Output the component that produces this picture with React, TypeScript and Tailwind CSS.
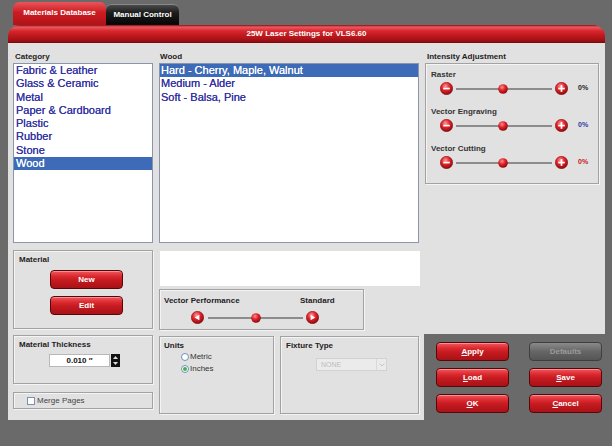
import React, { useId } from 'react';

function cleanId(s: string) {
  return s.replace(/[^a-zA-Z0-9_-]/g, '');
}

function RedCircle({ kind }: { kind: 'minus' | 'plus' | 'left' | 'right' }) {
  const id = 'g' + cleanId(useId());
  return (
    <svg width="13" height="13" viewBox="0 0 13 13" className="block shrink-0">
      <defs>
        <radialGradient id={id} cx="42%" cy="32%" r="70%">
          <stop offset="0%" stopColor="#ff9a9a" />
          <stop offset="45%" stopColor="#e2262c" />
          <stop offset="100%" stopColor="#8a080c" />
        </radialGradient>
      </defs>
      <circle cx="6.5" cy="6.5" r="6.2" fill={`url(#${id})`} stroke="#7a080b" strokeWidth="0.5" />
      {kind === 'minus' && <rect x="3.2" y="5.7" width="6.6" height="1.7" fill="#fff" />}
      {kind === 'plus' && (
        <>
          <rect x="3.2" y="5.7" width="6.6" height="1.7" fill="#fff" />
          <rect x="5.65" y="3.2" width="1.7" height="6.6" fill="#fff" />
        </>
      )}
      {kind === 'left' && <polygon points="3.6,6.5 8.4,3.7 8.4,9.3" fill="#fff" />}
      {kind === 'right' && <polygon points="9.4,6.5 4.6,3.7 4.6,9.3" fill="#fff" />}
    </svg>
  );
}

function Thumb() {
  const id = 't' + cleanId(useId());
  return (
    <svg width="10" height="10" viewBox="0 0 10 10" className="block">
      <defs>
        <radialGradient id={id} cx="40%" cy="32%" r="70%">
          <stop offset="0%" stopColor="#ff8c8c" />
          <stop offset="50%" stopColor="#dc1f25" />
          <stop offset="100%" stopColor="#8c070b" />
        </radialGradient>
      </defs>
      <circle cx="5" cy="5" r="4.8" fill={`url(#${id})`} />
    </svg>
  );
}

function Track({ width, thumbLeft }: { width: number; thumbLeft: number }) {
  return (
    <div className="relative h-[2px] bg-[#8c8c8c]" style={{ width }}>
      <div className="absolute top-[-4px]" style={{ left: thumbLeft }}>
        <Thumb />
      </div>
    </div>
  );
}

function RedBtn({ children, className }: { children: React.ReactNode; className?: string }) {
  return (
    <div
      className={
        'flex items-center justify-center rounded-[4px] border border-[#5a0508] bg-[linear-gradient(to_bottom,#ef5a5f_0%,#dc2a30_30%,#c41a20_55%,#a81217_100%)] text-[8px] font-bold leading-none text-white shadow-[inset_0_1px_0_rgba(255,255,255,0.35)] ' +
        (className || '')
      }
    >
      {children}
    </div>
  );
}

function Group({ className, children }: { className?: string; children?: React.ReactNode }) {
  return (
    <div
      className={
        'border border-[#a2a2a2] shadow-[inset_1px_1px_0_#f4f4f4,1px_1px_0_#f4f4f4] ' + (className || '')
      }
    >
      {children}
    </div>
  );
}

const label = 'text-[8px] font-bold leading-[9px] text-[#222]';

function IntensityRow({ name, color }: { name: string; color: string }) {
  return (
    <div className="h-[37px]">
      <div className={label + ' pl-[5px] text-[#333]'}>{name}</div>
      <div className="mt-[3px] flex h-[13px] items-center pl-[14px]">
        <RedCircle kind="minus" />
        <div className="ml-[3px]">
          <Track width={96} thumbLeft={42} />
        </div>
        <div className="ml-[3px]">
          <RedCircle kind="plus" />
        </div>
        <div className={'ml-[10px] text-[7px] font-bold ' + color}>0%</div>
      </div>
    </div>
  );
}

export default function App() {
  const categories = [
    'Fabric & Leather',
    'Glass & Ceramic',
    'Metal',
    'Paper & Cardboard',
    'Plastic',
    'Rubber',
    'Stone',
    'Wood',
  ];
  const woods = ['Hard - Cherry, Maple, Walnut', 'Medium - Alder', 'Soft - Balsa, Pine'];

  return (
    <div className="relative h-[446px] w-[612px] overflow-hidden bg-[#6a6a6a] font-['Liberation_Sans',Arial,sans-serif]">
      <div className="w-[605px] pl-[8px]">
        {/* Tabs */}
        <div className="flex h-[25px] items-end pl-[5px]">
          <div className="flex h-[23px] w-[93px] items-center justify-center rounded-t-[6px] bg-[linear-gradient(to_bottom,#e9555a,#cc1c22_45%,#b01318)] pb-[2px] text-[8px] font-bold text-white">
            Materials Database
          </div>
          <div className="flex h-[21px] w-[73px] items-center justify-center rounded-t-[6px] border-t border-[#8a8a8a] bg-[linear-gradient(to_bottom,#4a4a4a,#1c1c1c_40%,#050505)] text-[8px] font-bold text-white">
            Manual Control
          </div>
        </div>
        {/* Header */}
        <div className="flex h-[18px] items-center justify-center rounded-t-[12px] bg-[linear-gradient(to_bottom,#8b0c10_0px,#ea5a60_2px,#d8262c_6px,#c11a20_10px,#a51116_15px,#7a080b_18px)] text-[8px] font-bold text-white">
          25W Laser Settings for VLS6.60
        </div>
        {/* Body */}
        <div className="flex">
          {/* Left column */}
          <div className="flex h-[377px] w-[416px] gap-[6px] bg-[#e2e1e1] pl-[5px] pt-[9px]">
            {/* Sub column A */}
            <div className="flex w-[140px] flex-col">
              <div className={label + ' pl-[2px]'}>Category</div>
              <div className="mt-[2px] h-[180px] border border-[#8796ad] bg-white">
                {categories.map((c) => (
                  <div
                    key={c}
                    className={
                      'h-[13.3px] pl-[2px] text-[11px] leading-[13.3px] [text-shadow:0_0_0.5px_currentColor] ' +
                      (c === 'Wood' ? 'bg-[#3d6bb8] text-white' : 'text-[#3434a2]')
                    }
                  >
                    {c}
                  </div>
                ))}
              </div>
              <Group className="mt-[7px] h-[79px] pl-[5px] pt-[4px]">
                <div className={label}>Material</div>
                <RedBtn className="ml-[31px] mt-[6px] h-[19px] w-[73px]">New</RedBtn>
                <RedBtn className="ml-[31px] mt-[7px] h-[19px] w-[73px]">Edit</RedBtn>
              </Group>
              <Group className="mt-[6px] h-[49px] pl-[5px] pt-[4px]">
                <div className={label}>Material Thickness</div>
                <div className="ml-[30px] mt-[5px] flex h-[13px]">
                  <div className="flex w-[61px] items-center justify-center border border-[#b8b8b8] bg-white text-[8px] font-bold text-[#111]">
                    0.010 ″
                  </div>
                  <div className="ml-[1px] flex w-[9px] flex-col items-center justify-between bg-[#111] py-[2px]">
                    <svg width="5" height="3" viewBox="0 0 5 3" className="block">
                      <polygon points="2.5,0 5,3 0,3" fill="#ddd" />
                    </svg>
                    <svg width="5" height="3" viewBox="0 0 5 3" className="block">
                      <polygon points="0,0 5,0 2.5,3" fill="#ddd" />
                    </svg>
                  </div>
                </div>
              </Group>
              <Group className="mt-[8px] flex h-[17px] items-center pl-[13px]">
                <div className="h-[8px] w-[8px] border border-[#7b8fb2] bg-white" />
                <div className="ml-[2px] text-[8px] leading-none text-[#444]">Merge Pages</div>
              </Group>
            </div>
            {/* Sub column B */}
            <div className="flex w-[261px] flex-col">
              <div className={label + ' pl-[1px]'}>Wood</div>
              <div className="mt-[2px] h-[180px] w-[260px] border border-[#8796ad] bg-white">
                {woods.map((w, i) => (
                  <div
                    key={w}
                    className={
                      'h-[13.3px] pl-[1px] text-[11px] leading-[13.3px] [text-shadow:0_0_0.5px_currentColor] ' +
                      (i === 0 ? 'bg-[#3d6bb8] text-white' : 'text-[#3434a2]')
                    }
                  >
                    {w}
                  </div>
                ))}
              </div>
              <div className="ml-[1px] mt-[8px] h-[35px] w-[260px] bg-white" />
              <Group className="mt-[3px] h-[41px] w-[205px] pl-[4px] pt-[6px]">
                <div className="flex">
                  <div className={label + ' w-[136px]'}>Vector Performance</div>
                  <div className={label}>Standard</div>
                </div>
                <div className="ml-[27px] mt-[6px] flex h-[13px] items-center">
                  <RedCircle kind="left" />
                  <div className="ml-[4px]">
                    <Track width={95} thumbLeft={43} />
                  </div>
                  <div className="ml-[3px]">
                    <RedCircle kind="right" />
                  </div>
                </div>
              </Group>
              <div className="mt-[6px] flex h-[78px] gap-[6px]">
                <Group className="h-[78px] w-[115px] pl-[4px] pt-[4px]">
                  <div className={label}>Units</div>
                  <div className="ml-[17px] mt-[2px] flex h-[10px] items-center">
                    <div className="h-[8px] w-[8px] rounded-full border border-[#6f8fc0] bg-white" />
                    <div className="ml-[1px] text-[8px] leading-none text-[#333]">Metric</div>
                  </div>
                  <div className="ml-[17px] mt-[2px] flex h-[10px] items-center">
                    <div className="flex h-[8px] w-[8px] items-center justify-center rounded-full border border-[#6f8fc0] bg-white">
                      <div className="h-[4px] w-[4px] rounded-full bg-[#3fb04a]" />
                    </div>
                    <div className="ml-[1px] text-[8px] leading-none text-[#333]">Inches</div>
                  </div>
                </Group>
                <Group className="h-[78px] w-[139px] pl-[5px] pt-[4px]">
                  <div className={label}>Fixture Type</div>
                  <div className="ml-[30px] mt-[8px] flex h-[13px] w-[71px] border border-[#d2d2d2] bg-[#ebebeb]">
                    <div className="flex flex-1 items-center pl-[4px] text-[7px] leading-none text-[#bdbdbd]">NONE</div>
                    <div className="flex w-[10px] items-center justify-center border-l border-[#d8d8d8]">
                      <svg width="6" height="4" viewBox="0 0 6 4" className="block">
                        <polyline points="0.5,0.5 3,3 5.5,0.5" fill="none" stroke="#c4c4c4" strokeWidth="1" />
                      </svg>
                    </div>
                  </div>
                </Group>
              </div>
            </div>
          </div>
          {/* Right column */}
          <div className="flex w-[181px] flex-col">
            <div className="h-[291px] bg-[#e2e1e1] pt-[9px]">
              <div className={label + ' pl-[3px]'}>Intensity Adjustment</div>
              <Group className="ml-[1px] mt-[2px] h-[121px] w-[174px] pt-[6px]">
                <IntensityRow name="Raster" color="text-[#222]" />
                <IntensityRow name="Vector Engraving" color="text-[#2d3aa6]" />
                <IntensityRow name="Vector Cutting" color="text-[#c8161c]" />
              </Group>
            </div>
            <div className="grid grid-cols-[73px_73px] gap-x-[20px] gap-y-[7px] pl-[12px] pt-[8px]">
              <RedBtn className="h-[19px]">
                <span><u>A</u>pply</span>
              </RedBtn>
              <div className="flex h-[19px] items-center justify-center rounded-[4px] border border-[#3f3f3f] bg-[linear-gradient(to_bottom,#8a8a8a,#666_50%,#555)] text-[8px] font-bold leading-none text-[#9a9a9a]">
                Defaults
              </div>
              <RedBtn className="h-[19px]">
                <span><u>L</u>oad</span>
              </RedBtn>
              <RedBtn className="h-[19px]">
                <span><u>S</u>ave</span>
              </RedBtn>
              <RedBtn className="h-[19px]">
                <span><u>O</u>K</span>
              </RedBtn>
              <RedBtn className="h-[19px]">
                <span><u>C</u>ancel</span>
              </RedBtn>
            </div>
          </div>
        </div>
      </div>
    </div>
  );
}
